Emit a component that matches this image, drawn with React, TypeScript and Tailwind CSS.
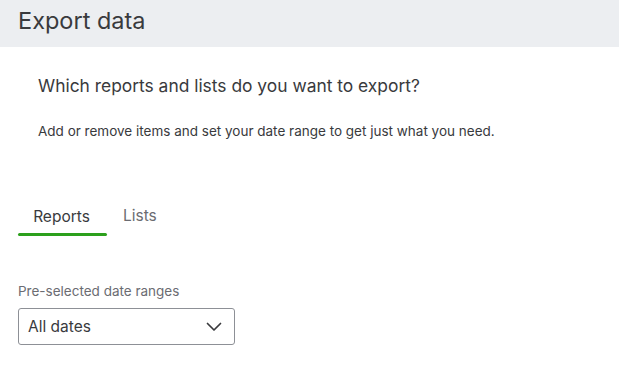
import React from "react";

export default function App() {
  return (
    <div className="w-[619px] h-[372px] bg-white text-[#393a3d] font-['Inter',sans-serif] overflow-hidden">
      <div className="h-[47px] bg-[#eceef1] flex items-center px-[18px] pb-[6px]">
        <h1 className="text-[23.5px] leading-none">Export data</h1>
      </div>
      <div className="pl-[38px] pt-[27px]">
        <h2 className="text-[17.4px] leading-[24px]">Which reports and lists do you want to export?</h2>
        <p className="mt-[24px] text-[13.5px] leading-[18px] text-[#393a3d]">
          Add or remove items and set your date range to get just what you need.
        </p>
      </div>
      <div className="pl-[18px] mt-[63px]">
        <div className="flex items-end">
          <div className="w-[89px] flex flex-col items-center">
            <span className="text-[15.5px] leading-[20px] pb-[6px] -ml-[2px]">Reports</span>
            <div className="h-[3px] w-full bg-[#2ca01c] rounded-full" />
          </div>
          <div className="ml-[16px] pb-[9px]">
            <span className="text-[15.5px] leading-[20px] text-[#6b6c72]">Lists</span>
          </div>
        </div>
        <div className="mt-[47px] text-[13.5px] leading-[16px] text-[#6b6c72]">Pre-selected date ranges</div>
        <div className="mt-[9px] w-[217px] h-[37px] border border-[#8d9096] rounded-[3px] flex items-center justify-between pl-[9px] pr-[12px]">
          <span className="text-[15.5px]">All dates</span>
          <svg width="16" height="10" viewBox="0 0 16 10" fill="none">
            <path d="M1.5 1.5 L8 8 L14.5 1.5" stroke="#393a3d" strokeWidth="1.7" strokeLinecap="round" strokeLinejoin="round" />
          </svg>
        </div>
      </div>
    </div>
  );
}
